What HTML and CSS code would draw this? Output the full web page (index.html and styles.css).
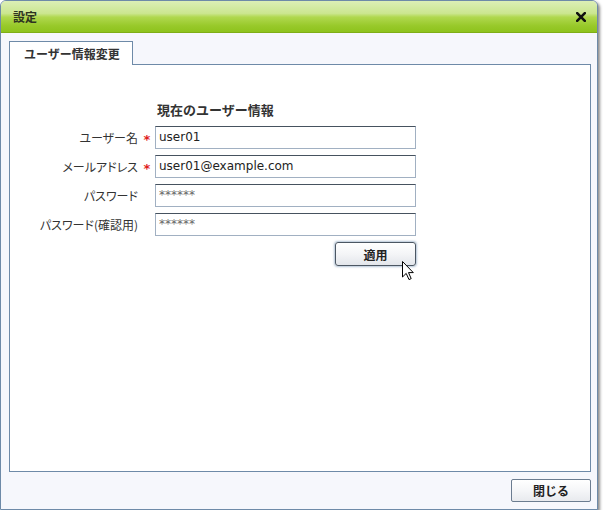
FILE: index.html
```html
<!DOCTYPE html>
<html lang="ja">
<head>
<meta charset="utf-8">
<title>設定</title>
<link rel="stylesheet" href="styles.css">
</head>
<body>
<div class="window">
  <div class="titlebar">
    <span class="title">設定</span>
    <span class="close-x">
      <svg width="10" height="10" viewBox="0 0 10 10"><path d="M1.2 1.2 L8.8 8.8 M8.8 1.2 L1.2 8.8" stroke="#111" stroke-width="2.6" stroke-linecap="square"/></svg>
    </span>
  </div>
  <div class="content">
    <div class="tabs">
      <div class="tab">ユーザー情報変更</div>
      <div class="tab-fill"></div>
    </div>
    <div class="panel">
      <div class="form">
        <div class="heading">現在のユーザー情報</div>
        <label class="label">ユーザー名</label><span class="req">*</span><div class="input">user01</div>
        <label class="label">メールアドレス</label><span class="req">*</span><div class="input">user01@example.com</div>
        <label class="label">パスワード</label><span class="req"></span><div class="input pw">******</div>
        <label class="label">パスワード(確認用)</label><span class="req"></span><div class="input pw">******</div>
        <div class="btn-row"><button class="btn btn-apply">適用</button></div>
      </div>
    </div>
    <div class="footer">
      <button class="btn btn-close">閉じる</button>
    </div>
  </div>
  <svg class="cursor" width="13" height="20" viewBox="0 0 13 20"><path d="M0.5 0.5 L0.5 16 L4.2 12.4 L7 18.6 L9.2 17.6 L6.5 11.6 L11.3 11.6 Z" fill="#fff" stroke="#000" stroke-width="1" stroke-linejoin="miter"/></svg>
</div>
</body>
</html>
```
FILE: styles.css
```css
html, body {
  margin: 0;
  padding: 0;
  background: #ffffff;
}
body {
  font-family: "DejaVu Sans", "Noto Sans CJK JP", sans-serif;
  font-size: 12px;
  color: #333;
}
.window {
  position: relative;
  box-sizing: border-box;
  width: 598px;
  height: 510px;
  border: 1px solid #6e8aa8;
  border-radius: 6px 6px 0 0;
  background: #f6f7fc;
  box-shadow: 2px 2px 3px rgba(0, 0, 0, 0.45);
  display: flex;
  flex-direction: column;
}
.titlebar {
  height: 31px;
  border-bottom: 1px solid #7fae16;
  border-radius: 5px 5px 0 0;
  background: linear-gradient(to bottom, #dcefb6 0%, #cbe690 40%, #b0d84f 52%, #98c92a 80%, #8ec31d 100%);
  display: flex;
  align-items: center;
  justify-content: space-between;
  padding: 0 10px 0 12px;
}
.title {
  font-family: "Noto Sans CJK JP", sans-serif;
  font-weight: bold;
  font-size: 12px;
  color: #2d3320;
}
.close-x {
  display: flex;
  width: 10px;
  height: 10px;
  margin-right: 1px;
}
.content {
  flex: 1;
  display: flex;
  flex-direction: column;
  padding: 8px 6px 0 8px;
}
.tabs {
  display: flex;
  height: 24px;
}
.tab {
  box-sizing: border-box;
  width: 124px;
  height: 24px;
  border: 1px solid #6e8aa8;
  border-bottom: none;
  background: #fff;
  font-family: "Noto Sans CJK JP", sans-serif;
  font-weight: bold;
  font-size: 12px;
  color: #333;
  padding-left: 14px;
  line-height: 24px;
}
.tab-fill {
  flex: 1;
  border-bottom: 1px solid #6e8aa8;
}
.panel {
  box-sizing: border-box;
  height: 407px;
  border: 1px solid #6e8aa8;
  border-top: none;
  background: #fff;
  padding-top: 36px;
}
.form {
  display: grid;
  grid-template-columns: 129px 16px 261px;
  row-gap: 6px;
  align-items: center;
}
.heading {
  grid-column: 3;
  font-family: "Noto Sans CJK JP", sans-serif;
  font-weight: bold;
  font-size: 13px;
  color: #333;
  line-height: 17px;
  padding-left: 2px;
  margin-bottom: 2px;
}
.label {
  grid-column: 1;
  text-align: right;
  font-family: "Noto Sans CJK JP", sans-serif;
  font-feature-settings: "palt";
  font-size: 12px;
  color: #333;
  padding-right: 1px;
}
.req {
  grid-column: 2;
  color: #e0201a;
  font-size: 13px;
  text-align: center;
  font-weight: bold;
  line-height: 10px;
  margin-top: 5px;
}
.input {
  grid-column: 3;
  box-sizing: border-box;
  height: 23px;
  border: 1px solid #a1b0c2;
  border-top-color: #46525f;
  background: #fff;
  padding: 0 4px 0 3px;
  line-height: 21px;
  color: #222;
  font-size: 12px;
}
.input.pw {
  color: #666;
  font-size: 12px;
}
.btn-row {
  grid-column: 3;
  display: flex;
  justify-content: flex-end;
}
.btn {
  box-sizing: border-box;
  font-family: "Noto Sans CJK JP", sans-serif;
  font-weight: bold;
  font-size: 12px;
  color: #222;
  padding: 0;
  margin: 0;
  cursor: default;
}
.btn-apply {
  width: 81px;
  height: 24px;
  border: 1px solid #4c5763;
  border-radius: 3px;
  background: linear-gradient(to bottom, #ffffff 0%, #f4f5f7 50%, #e3e6eb 100%);
  box-shadow: 0 0 2px 1px rgba(120, 150, 180, 0.55);
}
.footer {
  display: flex;
  justify-content: flex-end;
  padding-top: 7px;
}
.btn-close {
  width: 80px;
  height: 23px;
  border: 1px solid #6b7c90;
  border-radius: 2px;
  background: linear-gradient(to bottom, #ffffff 0%, #f5f6f8 50%, #e8eaee 100%);
}
.cursor {
  position: absolute;
  left: 401px;
  top: 260px;
}
```
